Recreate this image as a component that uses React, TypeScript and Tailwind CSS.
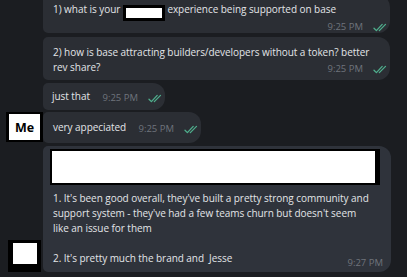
const font = { fontFamily: '"Open Sans", "Noto Sans", sans-serif' };

const Checks = () => (
  <svg width="14" height="9" viewBox="0 0 14 9" fill="none" className="shrink-0">
    <path d="M1 5.2l2.4 2.4L9.2 1.4" stroke="#4fae8d" strokeWidth="1.3" strokeLinecap="round" strokeLinejoin="round" />
    <path d="M6.3 7.6l6.2-6.2" stroke="#4fae8d" strokeWidth="1.3" strokeLinecap="round" />
  </svg>
);

const Time = ({ value, read = true }: { value: string; read?: boolean }) => (
  <div className="flex h-[12px] shrink-0 items-center gap-[10px] text-[9.5px] leading-[12px] tracking-[0px] text-[#6f747c]">
    <span>{value}</span>
    {read && <Checks />}
  </div>
);

export default function App() {
  return (
    <div
      className="h-[277px] w-[407px] overflow-hidden whitespace-nowrap bg-[#1b1d21] text-[10px] leading-[15px] tracking-[-0.05px] text-[#e3e5e8]"
      style={font}
    >
      {/* question 1 (cut off at top) */}
      <div className="ml-[43px] mt-[-5px] w-[347px] rounded-l-[5px] rounded-r-[12px] bg-[#2b2e34] pl-[10px] pr-[3px] pt-[7px]">
        <div className="h-[15px]">
          1) what is your{' '}
          <span className="inline-block h-[16px] w-[42px] bg-black p-[3px] align-[-8px]">
            <span className="block h-full w-full bg-white" />
          </span>{' '}
          experience being supported on base
        </div>
        <div className="mt-[4px] flex justify-end">
          <Time value="9:25 PM" />
        </div>
      </div>

      {/* question 2 */}
      <div className="ml-[43px] mt-[4px] w-[347px] rounded-l-[5px] rounded-r-[12px] bg-[#2b2e34] pb-[5px] pl-[10px] pr-[3px] pt-[8px]">
        <div>2) how is base attracting builders/developers without a token? better</div>
        <div className="flex items-end justify-between">
          <span>rev share?</span>
          <Time value="9:25 PM" />
        </div>
      </div>

      {/* just that */}
      <div className="ml-[43px] mt-[3px] flex w-[122px] items-end justify-between rounded-l-[5px] rounded-r-[12px] bg-[#2b2e34] pb-[6px] pl-[9px] pr-[3px] pt-[6px]">
        <span>just that</span>
        <Time value="9:25 PM" />
      </div>

      {/* very appeciated + Me */}
      <div className="mt-[2px] flex items-start">
        <div className="w-[43px] shrink-0 pl-[6px]">
          <div className="h-[30px] w-[37px] bg-black px-[3px] py-[2px]">
            <div className="flex h-full w-full items-center justify-center bg-white text-[12.5px] font-bold tracking-normal text-black">
              Me
            </div>
          </div>
        </div>
        <div className="flex w-[158px] items-end justify-between rounded-l-[5px] rounded-r-[12px] bg-[#2b2e34] pb-[8px] pl-[10px] pr-[3px] pt-[8px]">
          <span>very appeciated</span>
          <Time value="9:25 PM" />
        </div>
      </div>

      {/* reply */}
      <div className="mt-[3px] flex items-end">
        <div className="w-[43px] shrink-0 pl-[8px]">
          <div className="h-[32px] w-[33px] bg-black pl-[5px] pr-[4px] pt-[3px]">
            <div className="h-[21px] w-full bg-white" />
          </div>
        </div>
        <div className="w-[348px] rounded-l-[5px] rounded-r-[12px] bg-[#2f333b] pb-[6px] pt-[3px]">
          <div className="ml-[7px] h-[36px] w-[330px] bg-black p-[2px] pr-[5px]">
            <div className="h-full w-full bg-white" />
          </div>
          <div className="mt-[6px] pl-[10px] pr-[8px]">
            <div>1. It's been good overall, they've built a pretty strong community and</div>
            <div>support system - they've had a few teams churn but doesn't seem</div>
            <div>like an issue for them</div>
            <div className="h-[15px]" />
            <div className="flex items-end justify-between">
              <span>2. It's pretty much the brand and&nbsp; Jesse</span>
              <div className="mb-[-3px]">
                <Time value="9:27 PM" read={false} />
              </div>
            </div>
          </div>
        </div>
      </div>
    </div>
  );
}
